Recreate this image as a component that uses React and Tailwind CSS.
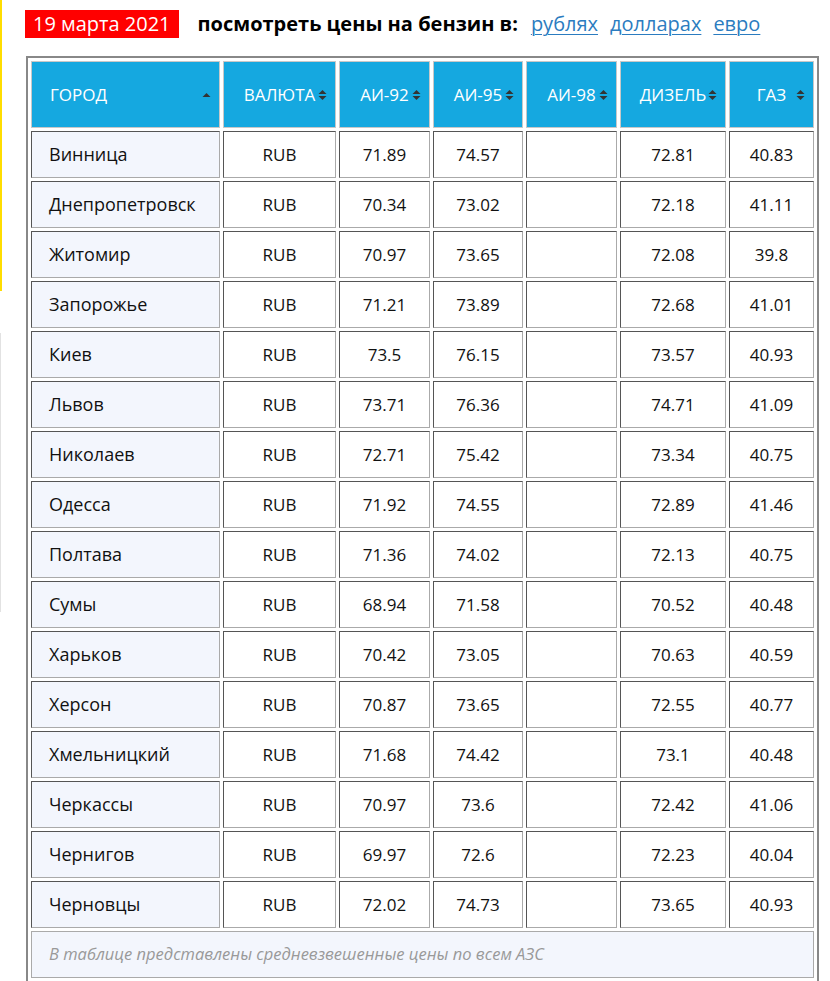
import React from "react";

const rows = [
  ["Винница", "71.89", "74.57", "72.81", "40.83"],
  ["Днепропетровск", "70.34", "73.02", "72.18", "41.11"],
  ["Житомир", "70.97", "73.65", "72.08", "39.8"],
  ["Запорожье", "71.21", "73.89", "72.68", "41.01"],
  ["Киев", "73.5", "76.15", "73.57", "40.93"],
  ["Львов", "73.71", "76.36", "74.71", "41.09"],
  ["Николаев", "72.71", "75.42", "73.34", "40.75"],
  ["Одесса", "71.92", "74.55", "72.89", "41.46"],
  ["Полтава", "71.36", "74.02", "72.13", "40.75"],
  ["Сумы", "68.94", "71.58", "70.52", "40.48"],
  ["Харьков", "70.42", "73.05", "70.63", "40.59"],
  ["Херсон", "70.87", "73.65", "72.55", "40.77"],
  ["Хмельницкий", "71.68", "74.42", "73.1", "40.48"],
  ["Черкассы", "70.97", "73.6", "72.42", "41.06"],
  ["Чернигов", "69.97", "72.6", "72.23", "40.04"],
  ["Черновцы", "72.02", "74.73", "73.65", "40.93"],
];

// sort arrows drawn like the datatables background icons
const SortBoth = () => (
  <svg width="9" height="11" viewBox="0 0 9 11" className="absolute right-[8px] top-1/2 -translate-y-1/2">
    <path d="M0.5 4.5 L4.5 0.5 L8.5 4.5 Z" fill="#333" />
    <path d="M0.5 6.5 L4.5 10.5 L8.5 6.5 Z" fill="#333" />
  </svg>
);

const SortAsc = () => (
  <svg width="9" height="5" viewBox="0 0 9 5" className="absolute right-[8px] top-1/2 -translate-y-1/2">
    <path d="M0.5 4.5 L4.5 0.5 L8.5 4.5 Z" fill="#333" />
  </svg>
);

const cell = "border border-t-[#555] border-l-[#555] border-r-[#aaa] border-b-[#aaa] h-[47px] p-0";
const head = "relative bg-[#15a8e0] border border-[#c8c8c8] h-[67px] p-0 text-white font-normal text-[17px]";

const App = () => {
  return (
    <div className="flex w-[830px] min-h-[981px] bg-white text-[#111]" style={{ fontFamily: '"Open Sans", "Noto Sans", sans-serif' }}>
      {/* left page edge */}
      <div className="flex flex-col w-[2px] shrink-0">
        <div className="h-[291px] w-[2px] bg-[#ffdd00]" />
        <div className="mt-[42px] h-[279px] w-px bg-[#e2e2e2]" />
      </div>

      <div className="pl-[23px] pt-[10px]">
        {/* top line */}
        <div className="flex items-center h-[28px]">
          <div className="bg-[#ff0000] text-white h-[28px] px-[8px] flex items-center text-[20px] leading-none">
            19 марта 2021
          </div>
          <div className="ml-[19px] font-bold text-[20px] text-black">посмотреть цены на бензин в:</div>
          <a href="#" className="ml-[13px] text-[20px] text-[#2b7cc0] underline underline-offset-[3px] decoration-1">рублях</a>
          <a href="#" className="ml-[12px] text-[20px] text-[#2b7cc0] underline underline-offset-[3px] decoration-1">долларах</a>
          <a href="#" className="ml-[12px] text-[20px] text-[#2b7cc0] underline underline-offset-[3px] decoration-1">евро</a>
        </div>

        {/* prices table */}
        <table className="mt-[18px] ml-[1px] table-fixed border-separate border-spacing-[3px] border-2 border-[#888] text-[17px]">
          <thead>
            <tr>
              <th className={`${head} w-[189px] text-left pl-[18px]`}>
                ГОРОД
                <SortAsc />
              </th>
              <th className={`${head} w-[113px]`}>ВАЛЮТА<SortBoth /></th>
              <th className={`${head} w-[91px]`}>АИ-92<SortBoth /></th>
              <th className={`${head} w-[90px]`}>АИ-95<SortBoth /></th>
              <th className={`${head} w-[91px]`}>АИ-98<SortBoth /></th>
              <th className={`${head} w-[106px]`}>ДИЗЕЛЬ<SortBoth /></th>
              <th className={`${head} w-[85px]`}>ГАЗ<SortBoth /></th>
            </tr>
          </thead>
          <tbody>
            {rows.map((r) => (
              <tr key={r[0]}>
                <td className={`${cell} bg-[#f3f6fd] pl-[17px] text-[18px]`}>{r[0]}</td>
                <td className={`${cell} text-center`}>RUB</td>
                <td className={`${cell} text-center`}>{r[1]}</td>
                <td className={`${cell} text-center`}>{r[2]}</td>
                <td className={cell}></td>
                <td className={`${cell} text-center`}>{r[3]}</td>
                <td className={`${cell} text-center`}>{r[4]}</td>
              </tr>
            ))}
            <tr>
              <td colSpan={7} className="border border-[#aaa] bg-[#f3f6fd] h-[47px] pl-[17px] text-[16.5px] italic text-[#999]">
                В таблице представлены средневзвешенные цены по всем АЗС
              </td>
            </tr>
          </tbody>
        </table>
      </div>
    </div>
  );
};

export default App;
